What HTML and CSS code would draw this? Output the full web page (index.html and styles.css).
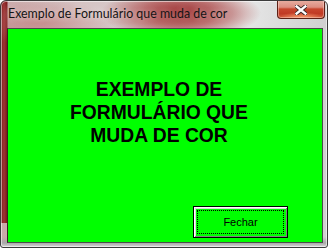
FILE: index.html
```html
<!DOCTYPE html>
<html lang="pt">
<head>
<meta charset="utf-8">
<title>Exemplo de Formulário que muda de cor</title>
<link rel="stylesheet" href="styles.css">
</head>
<body>
<div class="window">
  <div class="titlebar">
    <span class="title">Exemplo de Formulário que muda de cor</span>
    <button class="close" aria-label="Fechar janela">
      <svg width="12" height="10" viewBox="0 0 12 10">
        <path d="M1.6 1.4 L10.4 8.6 M10.4 1.4 L1.6 8.6" stroke="#3a2a28" stroke-width="4.2" stroke-linecap="square" fill="none"/>
        <path d="M1.6 1.4 L10.4 8.6 M10.4 1.4 L1.6 8.6" stroke="#ffffff" stroke-width="2.4" stroke-linecap="square" fill="none"/>
      </svg>
    </button>
  </div>
  <div class="client">
    <h1 class="heading">EXEMPLO DE<br>FORMULÁRIO QUE<br>MUDA DE COR</h1>
    <div class="footer">
      <button class="btn">Fechar</button>
    </div>
  </div>
</div>
</body>
</html>
```
FILE: styles.css
```css
html, body {
  margin: 0;
  padding: 0;
  background: #ffffff;
}

.window {
  box-sizing: border-box;
  width: 328px;
  height: 248px;
  border: 1px solid #3c3c3c;
  border-radius: 6px 6px 3px 3px;
  display: flex;
  flex-direction: column;
  overflow: hidden;
  box-shadow: inset 0 0 0 1px rgba(255,255,255,0.55);
  background:
    radial-gradient(ellipse 80px 26px at 180px 12px, rgba(150,28,28,0.95), rgba(165,45,45,0.6) 50%, rgba(175,70,70,0) 100%),
    radial-gradient(ellipse 75px 22px at 40px 22px, rgba(190,110,110,0.55), rgba(190,110,110,0) 100%),
    linear-gradient(to right, #5a1010 0, #8a2222 1px, #9e3434 3px, #7a1a1a 6px, rgba(0,0,0,0) 7px) 0 0 / 8px 222px no-repeat,
    linear-gradient(to bottom, rgba(0,0,0,0) 0, rgba(0,0,0,0) 236px, #a8a8a8 242px, #d8d8d8 246px),
    linear-gradient(to right, #c9a8a8 0, #d6c4c4 25%, #d8d0d0 55%, #e6e6e6 75%, #d0d0d0 100%);
}

.titlebar {
  height: 27px;
  flex: none;
  display: flex;
  align-items: flex-start;
  padding: 0 2px 0 7px;
}

.title {
  font-family: Lato, "Noto Sans", sans-serif;
  font-size: 12.4px;
  line-height: 16px;
  color: #141414;
  padding-top: 5px;
  white-space: nowrap;
  text-shadow: 0 0 6px rgba(255,255,255,0.7);
}

.close {
  margin: -1px 0 0 auto;
  width: 48px;
  height: 19px;
  padding: 0;
  border: 1px solid #5c2016;
  border-top: none;
  border-radius: 0 0 4px 4px;
  display: flex;
  align-items: center;
  justify-content: center;
  background:
    radial-gradient(ellipse 22px 6px at 50% 100%, rgba(255,170,120,0.9), rgba(255,150,100,0) 100%),
    linear-gradient(to bottom, #e8b0a4 0, #dc8e80 40%, #c8462e 50%, #c03a24 75%, #cf5a3c 100%);
  box-shadow: inset 0 0 0 1px rgba(255,220,210,0.45);
}

.close svg {
  display: block;
  margin-top: 1px;
}

.client {
  flex: none;
  height: 215px;
  margin-left: 6px;
  width: 316px;
  box-sizing: border-box;
  border: 1px solid #4a4a4a;
  border-left-color: #3a2020;
  background: #00ff00;
  display: flex;
  flex-direction: column;
}

.heading {
  margin: 49px 0 0;
  padding-right: 12px;
  text-align: center;
  font-family: "Liberation Sans", Arial, sans-serif;
  font-weight: bold;
  font-size: 19.3px;
  line-height: 23px;
  color: #000000;
}

.footer {
  margin-top: auto;
  display: flex;
  justify-content: flex-end;
  padding: 0 34px 4px 0;
}

.btn {
  width: 95px;
  height: 32px;
  box-sizing: border-box;
  border: 1px solid #000000;
  background: #00ff00;
  box-shadow: inset 1px 1px 0 #ffffff, inset -1px -1px 0 #808080, inset 2px 2px 0 #dcdcdc;
  outline: 1px dotted #000000;
  outline-offset: -5px;
  font-family: "Liberation Sans", Arial, sans-serif;
  font-size: 11px;
  color: #000000;
  padding: 0;
}
```
